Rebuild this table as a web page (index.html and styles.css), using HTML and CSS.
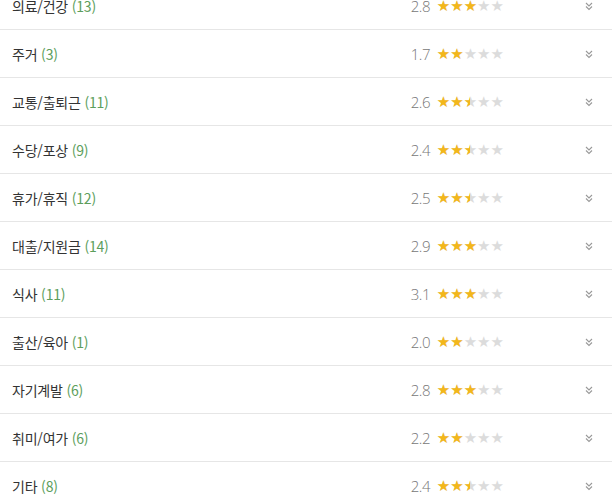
FILE: index.html
```html
<!DOCTYPE html>
<html lang="ko">
<head>
<meta charset="utf-8">
<link rel="stylesheet" href="styles.css">
</head>
<body>
<ul class="list">
  <li class="row"><span class="name">의료/건강 <em>(13)</em></span><span class="score">2.8</span><span class="stars"><span class="fill" style="width:60%"></span></span><svg class="chev" viewBox="0 0 10 10"><path d="M2 2l3 3 3-3M2 5.5l3 3 3-3"/></svg></li>
  <li class="row"><span class="name">주거 <em>(3)</em></span><span class="score">1.7</span><span class="stars"><span class="fill" style="width:40%"></span></span><svg class="chev" viewBox="0 0 10 10"><path d="M2 2l3 3 3-3M2 5.5l3 3 3-3"/></svg></li>
  <li class="row"><span class="name">교통/출퇴근 <em>(11)</em></span><span class="score">2.6</span><span class="stars"><span class="fill" style="width:50%"></span></span><svg class="chev" viewBox="0 0 10 10"><path d="M2 2l3 3 3-3M2 5.5l3 3 3-3"/></svg></li>
  <li class="row"><span class="name">수당/포상 <em>(9)</em></span><span class="score">2.4</span><span class="stars"><span class="fill" style="width:50%"></span></span><svg class="chev" viewBox="0 0 10 10"><path d="M2 2l3 3 3-3M2 5.5l3 3 3-3"/></svg></li>
  <li class="row"><span class="name">휴가/휴직 <em>(12)</em></span><span class="score">2.5</span><span class="stars"><span class="fill" style="width:50%"></span></span><svg class="chev" viewBox="0 0 10 10"><path d="M2 2l3 3 3-3M2 5.5l3 3 3-3"/></svg></li>
  <li class="row"><span class="name">대출/지원금 <em>(14)</em></span><span class="score">2.9</span><span class="stars"><span class="fill" style="width:60%"></span></span><svg class="chev" viewBox="0 0 10 10"><path d="M2 2l3 3 3-3M2 5.5l3 3 3-3"/></svg></li>
  <li class="row"><span class="name">식사 <em>(11)</em></span><span class="score">3.1</span><span class="stars"><span class="fill" style="width:60%"></span></span><svg class="chev" viewBox="0 0 10 10"><path d="M2 2l3 3 3-3M2 5.5l3 3 3-3"/></svg></li>
  <li class="row"><span class="name">출산/육아 <em>(1)</em></span><span class="score">2.0</span><span class="stars"><span class="fill" style="width:40%"></span></span><svg class="chev" viewBox="0 0 10 10"><path d="M2 2l3 3 3-3M2 5.5l3 3 3-3"/></svg></li>
  <li class="row"><span class="name">자기계발 <em>(6)</em></span><span class="score">2.8</span><span class="stars"><span class="fill" style="width:60%"></span></span><svg class="chev" viewBox="0 0 10 10"><path d="M2 2l3 3 3-3M2 5.5l3 3 3-3"/></svg></li>
  <li class="row"><span class="name">취미/여가 <em>(6)</em></span><span class="score">2.2</span><span class="stars"><span class="fill" style="width:40%"></span></span><svg class="chev" viewBox="0 0 10 10"><path d="M2 2l3 3 3-3M2 5.5l3 3 3-3"/></svg></li>
  <li class="row"><span class="name">기타 <em>(8)</em></span><span class="score">2.4</span><span class="stars"><span class="fill" style="width:50%"></span></span><svg class="chev" viewBox="0 0 10 10"><path d="M2 2l3 3 3-3M2 5.5l3 3 3-3"/></svg></li>
</ul>
</body>
</html>
```

FILE: styles.css
```css
html, body {
  margin: 0;
  padding: 0;
  background: #fff;
}
body {
  font-family: "Noto Sans CJK KR", "Noto Sans", sans-serif;
  color: #333;
  overflow: hidden;
}
.list {
  list-style: none;
  margin: -18px 0 0 0;
  padding: 0;
}
.row {
  display: flex;
  align-items: center;
  border-bottom: 1px solid #e6e6e6;
  padding: 1px 0 0 12px;
  box-sizing: content-box;
  height: 46px;
}
.name {
  flex: 1;
  font-size: 14px;
  letter-spacing: -0.2px;
}
.name em {
  font-style: normal;
  color: #5c9e5c;
}
.score {
  font-family: "Open Sans", "Noto Sans", sans-serif;
  font-weight: 300;
  font-size: 15px;
  color: #777;
  width: 26px;
  letter-spacing: -0.5px;
}
.stars {
  position: relative;
  display: inline-block;
  height: 15px;
  font-size: 15px;
  line-height: 15px;
  margin-right: 80px;
  font-family: "DejaVu Sans", sans-serif;
  white-space: nowrap;
}
.stars::before {
  content: "★★★★★";
  color: #dcdcdc;
}
.fill {
  position: absolute;
  left: 0;
  top: 0;
  height: 15px;
  overflow: hidden;
}
.fill::before {
  content: "★★★★★";
  color: #f3b71b;
}
.chev {
  width: 10px;
  height: 10px;
  margin-right: 18px;
  fill: none;
  stroke: #999;
  stroke-width: 1.1;
}
```
